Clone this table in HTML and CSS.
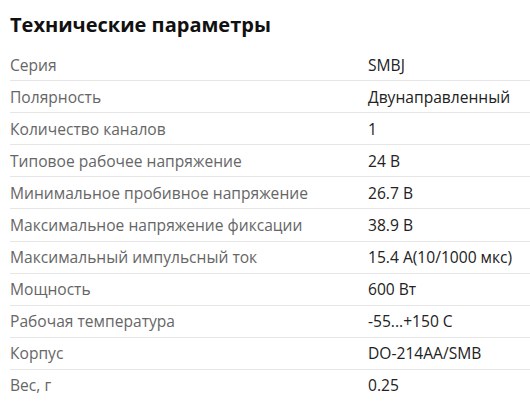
FILE: index.html
```html
<!DOCTYPE html>
<html lang="ru">
<head>
<meta charset="utf-8">
<link rel="stylesheet" href="styles.css">
</head>
<body>
<section class="specs">
  <h2 class="specs-title">Технические параметры</h2>
  <div class="specs-table">
    <div class="row"><span class="label">Серия</span><span class="value">SMBJ</span></div>
    <div class="row"><span class="label">Полярность</span><span class="value">Двунаправленный</span></div>
    <div class="row"><span class="label">Количество каналов</span><span class="value">1</span></div>
    <div class="row"><span class="label">Типовое рабочее напряжение</span><span class="value">24 В</span></div>
    <div class="row"><span class="label">Минимальное пробивное напряжение</span><span class="value">26.7 В</span></div>
    <div class="row"><span class="label">Максимальное напряжение фиксации</span><span class="value">38.9 В</span></div>
    <div class="row"><span class="label">Максимальный импульсный ток</span><span class="value">15.4 A(10/1000 мкс)</span></div>
    <div class="row"><span class="label">Мощность</span><span class="value">600 Вт</span></div>
    <div class="row"><span class="label">Рабочая температура</span><span class="value">-55...+150 C</span></div>
    <div class="row"><span class="label">Корпус</span><span class="value">DO-214AA/SMB</span></div>
    <div class="row"><span class="label">Вес, г</span><span class="value">0.25</span></div>
  </div>
</section>
</body>
</html>
```
FILE: styles.css
```css
html, body {
  margin: 0;
  padding: 0;
  background: #fff;
}
body {
  font-family: "Open Sans", "Noto Sans", sans-serif;
  overflow: hidden;
}
.specs {
  padding: 10px 0 0 10px;
}
.specs-title {
  margin: 0 0 9px;
  font-size: 20px;
  font-weight: 700;
  color: #111;
  line-height: 30px;
}
.specs-table {
  display: flex;
  flex-direction: column;
}
.row {
  display: grid;
  grid-template-columns: 358px 1fr;
  height: 31.1px;
  align-items: center;
  border-bottom: 1px solid #e6e6e6;
  font-size: 15.6px;
}
.row:last-child {
  border-bottom: none;
}
.label {
  color: #666;
}
.value {
  color: #222;
}
```
